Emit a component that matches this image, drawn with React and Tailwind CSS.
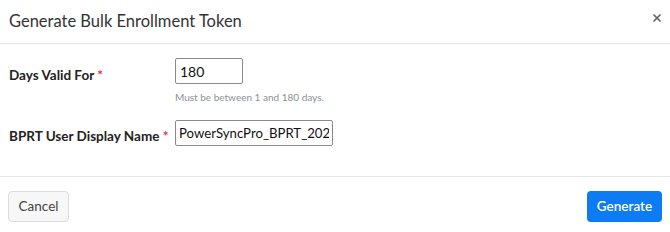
import { X } from "lucide-react";

function App() {
  return (
    <div
      className="w-[670px] h-[232px] bg-white text-[#212529] overflow-hidden"
      style={{ fontFamily: "Lato, 'Noto Sans', sans-serif" }}
    >
      <div className="flex items-center justify-between h-[44px] px-[9px] border-b border-[#e5e7eb]">
        <h2 className="text-[16.5px] leading-none text-[#333]">Generate Bulk Enrollment Token</h2>
        <button className="text-[#666] -mr-[2px] -mt-[7px]">
          <X size={12} strokeWidth={3.5} />
        </button>
      </div>

      <div className="px-[9px] pt-[14px] h-[132px]">
        <div className="flex">
          <label className="w-[166px] pt-[7px] text-[13.5px] font-bold text-[#222]">
            Days Valid For <span className="text-[#dc3545]">*</span>
          </label>
          <div>
            <input
              type="text"
              defaultValue="180"
              className="w-[68px] h-[26px] px-[4px] border border-[#8a8a8a] rounded-[2px] text-[14px] text-[#111] outline-none"
            />
            <p className="mt-[6px] text-[10px] text-[#8a9099]">Must be between 1 and 180 days.</p>
          </div>
        </div>
        <div className="flex mt-[15px]">
          <label className="w-[166px] pt-[6px] text-[13.5px] font-bold text-[#222]">
            BPRT User Display Name <span className="text-[#dc3545]">*</span>
          </label>
          <input
            type="text"
            defaultValue="PowerSyncPro_BPRT_2025"
            className="w-[158px] h-[26px] px-[3px] border border-[#8a8a8a] rounded-[2px] text-[13.2px] text-[#111] outline-none"
          />
        </div>
      </div>

      <div className="flex items-center justify-between px-[8px] pt-[14px] border-t border-[#e5e7eb]">
        <button className="h-[31px] w-[61px] rounded-[4px] border border-[#dcdcdc] bg-[#f7f7f7] text-[13.5px] text-[#444]">
          Cancel
        </button>
        <button className="h-[31px] w-[75px] rounded-[4px] bg-[#0d7cf2] text-[13.5px] font-semibold text-white">
          Generate
        </button>
      </div>
    </div>
  );
}

export default App;
